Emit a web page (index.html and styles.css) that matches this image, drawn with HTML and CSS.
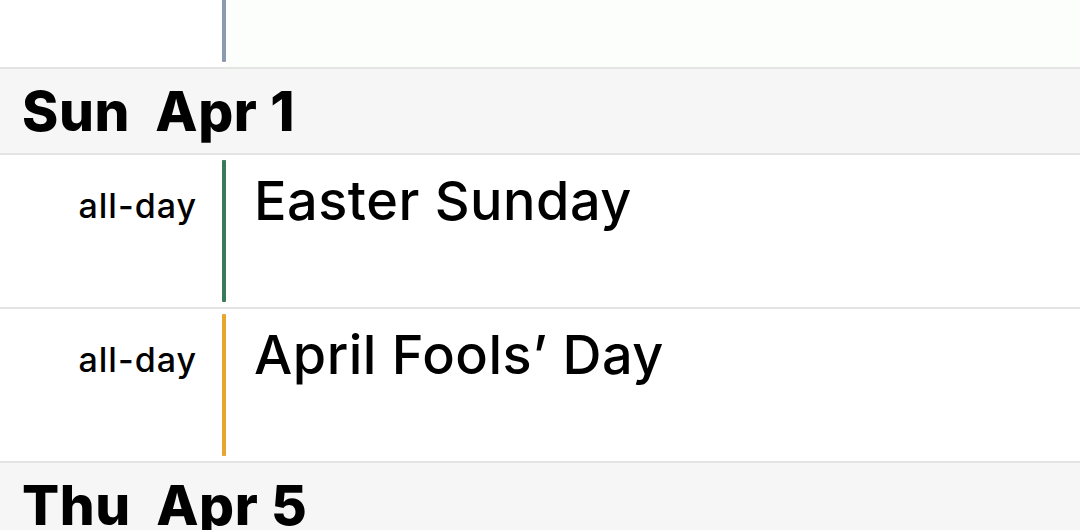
FILE: index.html
```html
<!DOCTYPE html>
<html>
<head>
<meta charset="utf-8">
<link rel="stylesheet" href="styles.css">
</head>
<body>
<div class="list">
  <div class="row">
    <div class="label"></div>
    <div class="bar bar-grey"></div>
    <div class="title tint"></div>
  </div>
  <div class="day">Sun&nbsp; Apr 1</div>
  <div class="row">
    <div class="label">all-day</div>
    <div class="bar bar-green"></div>
    <div class="title">Easter Sunday</div>
  </div>
  <div class="row">
    <div class="label">all-day</div>
    <div class="bar bar-orange"></div>
    <div class="title">April Fools’ Day</div>
  </div>
  <div class="day">Thu&nbsp; Apr 5</div>
</div>
</body>
</html>
```
FILE: styles.css
```css
html, body {
  margin: 0;
  padding: 0;
  background: #ffffff;
  overflow: hidden;
}
body {
  width: 1080px;
  height: 530px;
  font-family: Inter, "Noto Sans", sans-serif;
  color: #000;
}
.list {
  margin-top: -85px;
}
.row {
  display: grid;
  grid-template-columns: 222px 4px 1fr;
  height: 154px;
  border-bottom: 2px solid #e4e4e4;
  box-sizing: border-box;
}
.label {
  font-size: 34px;
  font-weight: 500;
  text-align: right;
  padding-right: 25px;
  padding-top: 31px;
  line-height: 40px;
  letter-spacing: 1px;
}
.bar {
  margin: 5px 0;
  border-radius: 1px;
}
.bar-grey { background: #8a9bb0; }
.bar-green { background: #387a5a; }
.bar-orange { background: #e9a52e; }
.title {
  font-size: 54px;
  font-weight: 500;
  padding-left: 28px;
  padding-top: 13px;
  line-height: 66px;
  letter-spacing: 0.5px;
}
.tint {
  background: #fcfefc;
}
.day {
  height: 86px;
  box-sizing: border-box;
  background: #f6f6f6;
  border-bottom: 2px solid #e4e4e4;
  font-size: 55px;
  font-weight: 800;
  padding-left: 22px;
  line-height: 84px;
  letter-spacing: 0.6px;
}
```
